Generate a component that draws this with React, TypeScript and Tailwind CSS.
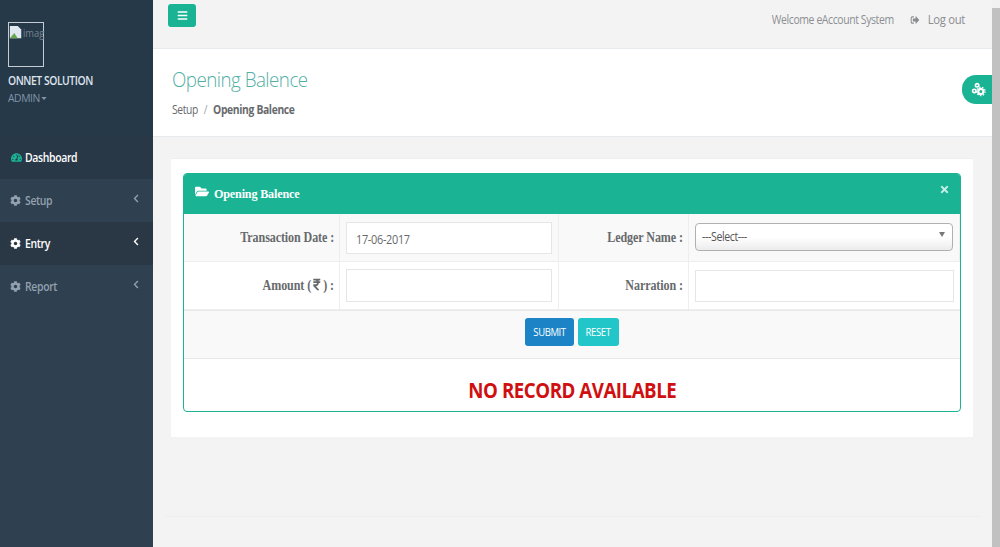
import type { ReactNode } from "react";
import { FaBars, FaChevronLeft, FaCog, FaFolderOpen, FaRupeeSign, FaSignOutAlt, FaTachometerAlt, FaTimes } from "react-icons/fa";

const sans = "font-['Open_Sans',sans-serif]";
const serif = "font-['Liberation_Serif',serif]";

function NavItem({ label, active }: { label: string; active?: boolean }) {
  return (
    <div className={`h-[43px] flex items-center pl-[10px] pr-[14px] ${active ? "bg-[#2a3846] text-white" : "text-[#93a0af]"}`}>
      <FaCog className="w-[11px] h-[11px] mr-[4px] shrink-0" />
      <span className="inline-block origin-left scale-x-[0.87] text-[12px] font-semibold tracking-[-0.4px]">{label}</span>
      <FaChevronLeft className="w-[6px] h-[9px] ml-auto -mt-[4px]" />
    </div>
  );
}

function Label({ children, className = "" }: { children: ReactNode; className?: string }) {
  return (
    <div className={`${serif} ${className} h-[48px] border-b border-r border-[#eeeeef] flex items-center justify-end pr-[5px] font-bold text-[14px] text-[#676a6c] tracking-[-0.1px]`}>
      <span className="inline-flex items-center origin-right scale-x-[0.86]">{children}</span>
    </div>
  );
}

function Field({ children, className = "" }: { children: ReactNode; className?: string }) {
  return (
    <div className={`${className} h-[48px] border-b border-r last:border-r-0 border-[#eeeeef] flex items-center px-[6px]`}>
      {children}
    </div>
  );
}

export default function App() {
  return (
    <div className={`${sans} flex h-[547px] w-[1000px] overflow-hidden bg-[#f3f3f4]`}>
      {/* Sidebar */}
      <aside className="w-[153px] shrink-0 bg-[#2f4050] flex flex-col">
        <div className="h-[136px] bg-[#263949] pt-[22px] pl-[8px]">
          <div className="w-[36px] h-[45px] border border-[#c5ccd3] flex items-start">
            <svg viewBox="0 0 16 16" className="w-[14px] h-[14px] mt-[2px] shrink-0">
              <path d="M1 1h9l4 4v10H1z" fill="#dfe7ef" />
              <path d="M1 15l5-6 4 6z" fill="#6aa84f" />
            </svg>
            <span className="inline-block origin-left scale-x-[0.85] mt-[2px] text-[11px] leading-[16px] text-[#77838f]">imag</span>
          </div>
          <div className="mt-[5px] origin-left scale-x-[0.86] text-[12px] leading-[18px] font-semibold text-[#dfe4ed] tracking-[-0.5px] whitespace-nowrap">ONNET SOLUTION</div>
          <div className="origin-left scale-x-[0.9] text-[11.5px] leading-[16px] text-[#8095a8] tracking-[-0.5px] flex items-center">
            ADMIN
            <span className="ml-[2px] mt-[1px] border-x-[3px] border-x-transparent border-t-[3px] border-t-[#8095a8]" />
          </div>
        </div>
        <div className="h-[43px] bg-[#293846] flex items-center pl-[11px] text-white">
          <FaTachometerAlt className="w-[11px] h-[11px] mr-[3px] text-[#1ab394] shrink-0" />
          <span className="inline-block origin-left scale-x-[0.87] text-[12px] font-semibold tracking-[-0.4px]">Dashboard</span>
        </div>
        <NavItem label="Setup" />
        <NavItem label="Entry" active />
        <NavItem label="Report" />
      </aside>

      {/* Main */}
      <main className="w-[839px] shrink-0 flex flex-col">
        <header className="h-[49px] border-b border-[#e7eaec] flex items-start justify-between pl-[15px] pr-[27px]">
          <button className="mt-[4px] w-[28px] h-[23px] rounded-[3px] bg-[#1ab394] flex items-center justify-center text-white">
            <FaBars className="w-[11px] h-[11px]" />
          </button>
          <div className="flex items-center h-[39px] text-[#8b8e91] origin-right scale-x-[0.87]">
            <span className="text-[12px] tracking-[-0.45px]">Welcome eAccount System</span>
            <FaSignOutAlt className="w-[11px] h-[10px] ml-[19px] mr-[9px]" />
            <span className="text-[13px] tracking-[-0.35px]">Log out</span>
          </div>
        </header>

        <section className="relative h-[88px] bg-white border-b border-[#e7eaec] pl-[19px] pt-[16px]">
          <h1 className="origin-left scale-x-[0.895] text-[21px] leading-[29px] font-light text-[#53afa5] tracking-[-0.6px]">Opening Balence</h1>
          <div className="mt-[7px] origin-left scale-x-[0.86] text-[12px] leading-[17px] text-[#676a6c] tracking-[-0.4px]">
            Setup <span className="mx-[4px] text-[#a0a3a5]">/</span> <strong className="font-bold">Opening Balence</strong>
          </div>
          <div className="absolute right-0 top-[26px] w-[30px] h-[29px] bg-[#1ab394] rounded-l-[14px] flex items-center justify-center text-white">
            <svg viewBox="0 0 16 16" className="w-[15px] h-[15px] ml-[2px]" fill="none" stroke="#fff">
              <circle cx="6.500" cy="3.500" r="1.800" strokeWidth="1.800" />
              <circle cx="3.500" cy="9.500" r="1.800" strokeWidth="1.800" />
              <circle cx="10.500" cy="10" r="2.800" strokeWidth="2.400" />
              <circle cx="10.500" cy="10" r="4.600" strokeWidth="1.200" strokeDasharray="1.600 1.600" />
            </svg>
          </div>
        </section>

        <div className="pl-[18px] pr-[19px] pt-[21px]">
          <div className="bg-white h-[279px] px-[12px] pt-[14px] border-t-[1px] border-[#eeeeef]">
            <div className="rounded-[4px] border border-[#1ab394] overflow-hidden h-[239px] bg-white">
              <div className="h-[40px] bg-[#1ab394] text-white flex items-start pl-[11px] pr-[11px]">
                <FaFolderOpen className="w-[14px] h-[13px] mt-[11px] mr-[5px] shrink-0" />
                <span className={`${serif} inline-block origin-left scale-x-[0.9] font-bold text-[13.500px] leading-[40px] tracking-[-0.2px]`}>Opening Balence</span>
                <FaTimes className="ml-auto mt-[10px] w-[9px] h-[11px] text-[#c6eee6]" />
              </div>

              {/* Form */}
              <div className="grid grid-cols-[156px_219px_130px_1fr] h-[96px]">
                <Label className="bg-[#f9f9f9]">Transaction Date :</Label>
                <Field className="bg-[#f9f9f9]">
                  <div className="h-[32px] w-full bg-white border border-[#e5e6e7] pl-[9px] text-[12px] leading-[33px] text-[#676a6c] tracking-[-0.35px]">
                    <span className="inline-block origin-left scale-x-[0.91]">17-06-2017</span>
                  </div>
                </Field>
                <Label className="bg-[#f9f9f9]">Ledger Name :</Label>
                <Field className="bg-[#f9f9f9]">
                  <div className="h-[28px] w-full mt-[-2px] rounded-[4px] border border-[#b0b0b0] bg-gradient-to-b from-white via-white to-[#ececec] pl-[6px] pr-[7px] flex items-center justify-between text-[12px] text-[#555555] tracking-[-0.45px]">
                    <span className="inline-block origin-left scale-x-[0.88]">---Select---</span>
                    <span className="border-x-[3px] border-x-transparent border-t-[5px] border-t-[#777777] -mt-[4px]" />
                  </div>
                </Field>
                <Label>
                  Amount (<FaRupeeSign className="w-[10px] h-[13px] mx-[2px] -mt-[2px]" />) :
                </Label>
                <Field>
                  <div className="h-[33px] w-full bg-white border border-[#e5e6e7]" />
                </Field>
                <Label>Narration :</Label>
                <Field>
                  <div className="h-[32px] w-full bg-white border border-[#e5e6e7]" />
                </Field>
              </div>

              <div className="h-[49px] bg-[#f9f9f9] border-y border-[#e7eaec] flex items-start pt-[7px] justify-center gap-[4px]">
                <button className="w-[49px] h-[28px] rounded-[3px] bg-[#1c84c6] text-white text-[11.500px] tracking-[-0.5px]">
                  <span className="inline-block scale-x-[0.83]">SUBMIT</span>
                </button>
                <button className="w-[41px] h-[28px] rounded-[3px] bg-[#23c6c8] text-white text-[11.500px] tracking-[-0.5px]">
                  <span className="inline-block scale-x-[0.83]">RESET</span>
                </button>
              </div>
              <div className="h-[52px] pt-[8px] flex items-center justify-center">
                <span className="inline-block scale-x-[0.85] text-[22px] font-bold text-[#d01010] tracking-[-0.55px] whitespace-nowrap">NO RECORD AVAILABLE</span>
              </div>
            </div>
          </div>
        </div>
        <div className="mt-auto mx-[12px] h-[31px] border-t border-[#eeeeef]" />
      </main>

      {/* Scrollbar */}
      <div className="w-[8px] shrink-0 bg-[#f1f1f1] pt-[8px]">
        <div className="h-full bg-[#c1c1c1]" />
      </div>
    </div>
  );
}
